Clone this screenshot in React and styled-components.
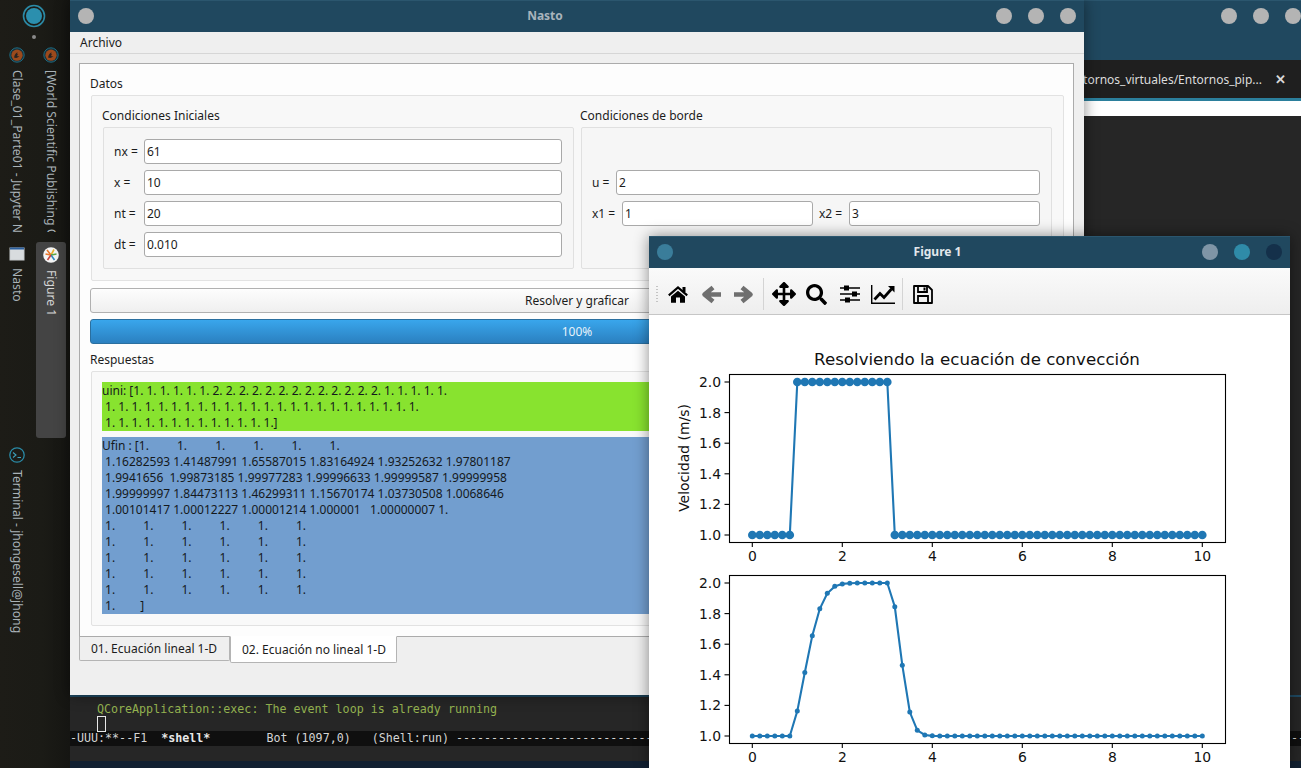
import React from "react";
import styled, { createGlobalStyle } from "styled-components";
import { FaArrowsAlt, FaSearch } from "react-icons/fa";

const uFin = [
  1, 1, 1, 1, 1, 1, 1.16282593, 1.41487991, 1.65587015, 1.83164924, 1.93252632, 1.97801187,
  1.9941656, 1.99873185, 1.99977283, 1.99996633, 1.99999587, 1.99999958, 1.99999997, 1.84473113,
  1.46299311, 1.15670174, 1.03730508, 1.0068646, 1.00101417, 1.00012227, 1.00001214, 1.000001,
  1.00000007,
];
const finData = Array.from({ length: 61 }, (_, i) => (i < uFin.length ? uFin[i] : 1));
const iniData = Array.from({ length: 61 }, (_, i) => (i >= 6 && i <= 18 ? 2 : 1));

const UINI = `uini: [1. 1. 1. 1. 1. 1. 2. 2. 2. 2. 2. 2. 2. 2. 2. 2. 2. 2. 2. 1. 1. 1. 1. 1.
 1. 1. 1. 1. 1. 1. 1. 1. 1. 1. 1. 1. 1. 1. 1. 1. 1. 1. 1. 1. 1. 1. 1. 1.
 1. 1. 1. 1. 1. 1. 1. 1. 1. 1. 1. 1. 1.]`;

const ONES = " 1.         1.         1.         1.         1.         1.";
const UFIN = `Ufin : [1.         1.         1.         1.         1.         1.
 1.16282593 1.41487991 1.65587015 1.83164924 1.93252632 1.97801187
 1.9941656  1.99873185 1.99977283 1.99996633 1.99999587 1.99999958
 1.99999997 1.84473113 1.46299311 1.15670174 1.03730508 1.0068646
 1.00101417 1.00012227 1.00001214 1.000001   1.00000007 1.
${ONES}
${ONES}
${ONES}
${ONES}
${ONES}
 1.        ]`;

const GlobalStyle = createGlobalStyle`
  html, body {
    margin: 0;
    padding: 0;
    overflow: hidden;
    background: #1b1a16;
  }
  * { box-sizing: border-box; }
`;

const Desktop = styled.div`
  position: relative;
  width: 1301px;
  height: 768px;
  overflow: hidden;
  font-family: "Noto Sans", "Liberation Sans", sans-serif;
  font-size: 12px;
  color: #1c1c1c;
  background: #1b1a16;
`;

/* left dock */
const Dock = styled.div`
  width: 70px;
  height: 768px;
  display: flex;
  flex-direction: column;
  align-items: stretch;
  background: linear-gradient(90deg, #1d1c17 0%, #1b1b16 60%, #151512 100%);
  color: #aeb6ba;
`;

const DockLogo = styled.div`
  height: 41px;
  display: flex;
  flex-direction: column;
  align-items: center;
  padding: 4px 2px 0 0;
  gap: 7px;
`;

const LogoDot = styled.span`
  width: 4px;
  height: 4px;
  border-radius: 50%;
  background: #8a8a8a;
`;

const TaskGrid = styled.div`
  display: grid;
  grid-template-columns: 34px 30px;
  column-gap: 2px;
  grid-template-rows: 200px 200px 1fr;
`;

const Task = styled.div`
  display: flex;
  flex-direction: column;
  align-items: center;
  gap: 7px;
  padding-top: ${(p) => (p.$active ? 5 : 6)}px;
  margin-top: ${(p) => (p.$active ? 1 : 0)}px;
  height: ${(p) => (p.$active ? 196 : 200)}px;
  border-radius: 3px;
  background: ${(p) => (p.$active ? "#444444" : "transparent")};
`;

const TaskLabel = styled.div`
  writing-mode: vertical-rl;
  white-space: nowrap;
  overflow: hidden;
  font-size: 12.2px;
  line-height: 16px;
  max-height: ${(p) => p.$max || 164}px;
  color: ${(p) => (p.$active ? "#d6d6d6" : "#a9b2b7")};
`;

/* windows */
const WindowFrame = styled.div`
  position: absolute;
  left: ${(p) => p.$left}px;
  top: ${(p) => p.$top}px;
  width: ${(p) => p.$width}px;
  height: ${(p) => p.$height}px;
  display: flex;
  flex-direction: column;
  box-shadow: ${(p) => (p.$flat ? "none" : "0 0 14px rgba(0, 0, 0, 0.45)")};
`;

const TitleBar = styled.div`
  height: ${(p) => p.$height || 32}px;
  flex: none;
  display: flex;
  align-items: flex-start;
  padding: 8px ${(p) => (p.$right === undefined ? 8 : p.$right)}px 0 8px;
  background: #20485f;
  border-top: 1px solid #2b566e;
`;

const TitleText = styled.div`
  flex: 1;
  text-align: center;
  font-weight: 700;
  line-height: 14px;
  color: ${(p) => p.$color || "#a9b4bc"};
`;

const Buttons = styled.div`
  display: flex;
  gap: 16px;
  margin-top: -1px;
`;

const Dot = styled.span`
  display: block;
  width: 16px;
  height: 16px;
  margin-top: ${(p) => (p.$lead ? -1 : 0)}px;
  border-radius: 50%;
  background: ${(p) => p.$color || "#b4b4b4"};
`;

/* terminal behind */
const TermTabs = styled.div`
  height: 38px;
  flex: none;
  display: flex;
  justify-content: flex-end;
  align-items: center;
  gap: 13px;
  padding-right: 15px;
  background: #1f1f1f;
  color: #dcdcdc;
`;

const TabClose = styled.span`
  font-weight: 700;
  font-size: 13px;
  color: #d8d8d8;
`;

const TermAccent = styled.div`
  height: 3px;
  flex: none;
  background: #2b7f9c;
`;

const TermBody = styled.div`
  flex: 1;
  min-height: 0;
  display: flex;
  background: #262626;
`;

const EditorColumn = styled.div`
  flex: 1;
  display: flex;
  flex-direction: column;
  justify-content: space-between;
`;

const WhiteStripe = styled.div`
  height: 15px;
  background: #ffffff;
`;

const ScrollTrack = styled.div`
  width: 13px;
  flex: none;
  padding: 4px 0 5px 8px;
  background: #1a1c1e;
`;

const ScrollThumb = styled.div`
  height: 100%;
  width: 100%;
  border-radius: 3px 0 0 3px;
  background: #7f7f7f;
`;

const Emacs = styled.div`
  display: flex;
  flex-direction: column;
  font-family: "DejaVu Sans Mono", "Liberation Mono", monospace;
  font-size: 11.66px;
  white-space: pre;
  border-top: 2px solid #1f4a63;
`;

const ShellLine = styled.div`
  height: ${(p) => p.$height}px;
  padding-top: ${(p) => p.$top || 0}px;
  line-height: 15px;
  padding-left: 27px;
  color: #94b350;
`;

const EmacsCursor = styled.span`
  display: block;
  position: relative;
  z-index: 1;
  width: 9px;
  height: 16px;
  border: 1px solid #e8e8e8;
`;

const ModeLine = styled.div`
  height: 15px;
  line-height: 15px;
  overflow: hidden;
  background: #0f0f0f;
  color: #d4d4d4;
  b { font-weight: 700; color: #e8e8e8; }
`;

const MiniBuffer = styled.div`
  height: 15px;
  background: #262626;
`;

const BottomEdge = styled.div`
  height: 7px;
  background: #122031;
`;

/* Nasto */
const NastoBody = styled.div`
  flex: 1;
  display: flex;
  flex-direction: column;
  background: #efefef;
`;

const MenuBar = styled.div`
  height: 22px;
  flex: none;
  padding-left: 10px;
  line-height: 21px;
  border-bottom: 1px solid #d6d6d6;
`;

const TabsArea = styled.div`
  padding: 9px 10px 0 9px;
`;

const TabPane = styled.div`
  height: 574px;
  padding: 12px 9px 0 10px;
  border: 1px solid #ababab;
  background: #fdfdfd;
`;

const GroupTitle = styled.div`
  height: 16px;
  line-height: 16px;
  margin-bottom: ${(p) => p.$gap || 3}px;
  margin-left: ${(p) => p.$indent || 0}px;
`;

const DataGroup = styled.div`
  height: 186px;
  margin-left: 1px;
  padding: 12px 11px 0;
  display: grid;
  grid-template-columns: 471px 471px;
  column-gap: 7px;
  border: 1px solid #e2e2e2;
  border-radius: 2px;
  background: #f8f8f8;
`;

const CondColumn = styled.div`
  display: flex;
  flex-direction: column;
`;

const CondFrame = styled.div`
  height: 142px;
  padding: 0 11px 0 10px;
  display: flex;
  flex-direction: column;
  justify-content: center;
  gap: 6px;
  border: 1px solid #e0e0e0;
  border-radius: 2px;
  background: #f6f6f6;
`;

const FieldRow = styled.div`
  display: flex;
  gap: 6px;
`;

const FieldPair = styled.div`
  flex: 1;
  display: flex;
  align-items: center;
`;

const FieldLabel = styled.span`
  flex: none;
  width: ${(p) => p.$width}px;
  white-space: nowrap;
`;

const Field = styled.div`
  flex: 1;
  height: 25px;
  line-height: 23px;
  padding-left: 2px;
  border: 1px solid #a9a9a9;
  border-radius: 3px;
  background: #ffffff;
`;

const SolveButton = styled.div`
  height: 25px;
  margin-top: 7px;
  line-height: 23px;
  text-align: center;
  border: 1px solid #b0b0b0;
  border-radius: 3px;
  background: linear-gradient(180deg, #fdfdfd, #efefef);
`;

const Progress = styled.div`
  height: 25px;
  margin-top: 6px;
  line-height: 23px;
  text-align: center;
  color: #e8f2fa;
  border: 1px solid #2a6f9f;
  border-radius: 3px;
  background: linear-gradient(180deg, #39a6ec, #2b80c0);
`;

const AnswerTitle = styled(GroupTitle)`
  margin-top: 8px;
  margin-bottom: 3px;
`;

const AnswerGroup = styled.div`
  height: 255px;
  margin-left: 1px;
  padding: 10px 11px 0 10px;
  display: flex;
  flex-direction: column;
  gap: 6px;
  border: 1px solid #e2e2e2;
  border-radius: 2px;
  background: #f9f9f9;
`;

const AnswerBlock = styled.div`
  height: ${(p) => p.$height}px;
  white-space: pre;
  line-height: 16.05px;
  padding-top: 1px;
  color: #15191c;
  background: ${(p) => p.$color};
`;

const TabBar = styled.div`
  display: flex;
  align-items: flex-start;
`;

const PageTab = styled.div`
  height: ${(p) => (p.$active ? 27 : 25)}px;
  width: ${(p) => (p.$active ? 167 : 151)}px;
  margin-top: -1px;
  padding-left: 11px;
  line-height: ${(p) => (p.$active ? 26 : 24)}px;
  white-space: nowrap;
  border: 1px solid #b4b4b4;
  border-top-color: ${(p) => (p.$active ? "#ffffff" : "#ababab")};
  border-radius: 0 0 2px 2px;
  background: ${(p) => (p.$active ? "#ffffff" : "#efefef")};
`;

/* Figure */
const FigureBody = styled.div`
  flex: 1;
  display: flex;
  flex-direction: column;
  background: #ffffff;
`;

const Toolbar = styled.div`
  height: 47px;
  flex: none;
  display: flex;
  align-items: center;
  padding: 6px 0 0 7px;
  border-bottom: 1px solid #c6c6c6;
  background: linear-gradient(180deg, #fafafa, #eeeeee);
`;

const Grip = styled.span`
  width: 2px;
  height: 18px;
  margin-right: 3px;
  background-image: radial-gradient(circle, #c4c4c4 0.7px, transparent 0.9px);
  background-size: 2px 3px;
`;

const ToolButton = styled.span`
  width: 33px;
  height: 33px;
  flex: none;
  display: flex;
  align-items: center;
  justify-content: center;
  color: ${(p) => (p.$off ? "#6f6f6f" : "#000000")};
  font-size: ${(p) => p.$size || 21}px;
`;

const ToolSep = styled.span`
  width: 1px;
  height: 32px;
  margin: 0 3px;
  background: #d4d4d4;
`;

const PlotArea = styled.svg`
  display: block;
  flex: none;
`;

const DockRing = () => (
  <svg width="24" height="24" viewBox="0 0 24 24">
    <circle cx="12" cy="12" r="10.5" fill="none" stroke="#2b8aa6" strokeWidth="1.6" />
    <circle cx="12" cy="12" r="8" fill="#2b8fae" />
  </svg>
);

const BrowserIcon = () => (
  <svg width="16" height="16" viewBox="0 0 16 16">
    <circle cx="8" cy="8" r="7.2" fill="#16313c" stroke="#1f6a80" strokeWidth="1" />
    <circle cx="8" cy="8.2" r="5.6" fill="#9c4a1c" />
    <path d="M5 10.5c2 .8 4.4.4 5.4-1.4-.9.4-1.8.3-2.4-.3l1.2-1.2-1-.4.3-2c-1.6.8-2.8 2.4-3.5 5.300z" fill="#2a2320" />
  </svg>
);

const WindowIcon = () => (
  <svg width="16" height="14" viewBox="0 0 16 14">
    <rect x="1" y="1" width="14" height="12" fill="#d8dcde" stroke="#c8ccce" />
    <rect x="1" y="0.500" width="14" height="2" fill="#2a5f9e" />
  </svg>
);

const FigureIcon = () => (
  <svg width="16" height="16" viewBox="0 0 16 16">
    <circle cx="8" cy="8" r="7.8" fill="#f4f4f4" />
    <path d="M8 8L4 3M8 8L2.500 7" stroke="#e8762c" strokeWidth="1.600" />
    <path d="M8 8L11 2.500" stroke="#e8b02c" strokeWidth="1.600" />
    <path d="M8 8L13.500 7" stroke="#5aa845" strokeWidth="1.300" />
    <path d="M8 8L11.500 13" stroke="#2f8ac0" strokeWidth="1.600" />
    <path d="M8 8L4.500 13" stroke="#c8443c" strokeWidth="1.600" />
  </svg>
);

const TerminalIcon = () => (
  <svg width="16" height="16" viewBox="0 0 16 16">
    <circle cx="8" cy="8" r="7.200" fill="none" stroke="#2a8aa6" strokeWidth="1.300" />
    <path d="M4 5.500L7 8L4 10.500M8.500 10.500H12" fill="none" stroke="#3fa0bb" strokeWidth="1.100" />
  </svg>
);

/* toolbar glyphs, drawn to follow the old matplotlib set */
const HomeGlyph = () => (
  <svg width="20" height="17" viewBox="0 0 20 17">
    <path d="M0.800 9.300L10 1.500L19.200 9.300" fill="none" stroke="#000" strokeWidth="2.200" />
    <rect x="14.500" y="1" width="3" height="5" fill="#000" />
    <path d="M3 10.500L10 4.700L17 10.500V16.800H12V11.500H8V16.800H3Z" fill="#000" />
  </svg>
);

const BackGlyph = ({ flip }) => (
  <svg width="20" height="19" viewBox="0 0 20 19" transform={flip ? "scale(-1 1)" : undefined}>
    <path d="M20 9.500H5M12 2.500L3.500 9.500L12 16.500" fill="none" stroke="#6f6f6f" strokeWidth="4.600" strokeLinejoin="round" />
  </svg>
);

const SlidersGlyph = () => (
  <svg width="20" height="18" viewBox="0 0 20 18">
    <path d="M0 3H20M0 9H20M0 15H20" stroke="#000" strokeWidth="1.600" />
    <rect x="4" y="0.500" width="5" height="5" fill="#000" />
    <rect x="12" y="6.500" width="5" height="5" fill="#000" />
    <rect x="5" y="12.500" width="5" height="5" fill="#000" />
  </svg>
);

const ChartGlyph = () => (
  <svg width="24" height="19" viewBox="0 0 24 19">
    <path d="M0.700 0V18.300H24" fill="none" stroke="#000" strokeWidth="1.400" />
    <path d="M3.500 14.500L9 8.500L13 12.500L20.500 4" fill="none" stroke="#000" strokeWidth="2.800" />
    <path d="M17 1H23.500V7.500Z" fill="#000" />
  </svg>
);

const SaveGlyph = () => (
  <svg width="20" height="19" viewBox="0 0 20 19">
    <path d="M1 1H15L19 5V18H1Z" fill="none" stroke="#000" strokeWidth="1.800" strokeLinejoin="round" />
    <path d="M5 1.500V7H14V1.500" fill="none" stroke="#000" strokeWidth="1.800" />
    <rect x="10.500" y="2.500" width="2" height="3" fill="#000" />
    <path d="M5 17.500V11H15V17.500" fill="none" stroke="#000" strokeWidth="1.800" />
  </svg>
);

const X0 = 752.3;
const PX_PER_X = 45;
const xPos = (v) => X0 + v * PX_PER_X;

function Axes({ top, data, radius, yLabel }) {
  const y2 = top + 8;
  const yPos = (v) => y2 + (2 - v) * 153;
  const bottom = top + 168;
  const points = data.map((v, i) => [xPos((i * 10) / 60), yPos(v)]);
  return (
    <g fontFamily='"DejaVu Sans", sans-serif' fontSize="13.9" fill="#111">
      <polyline
        points={points.map((p) => p.join(",")).join(" ")}
        fill="none"
        stroke="#1f77b4"
        strokeWidth="2.1"
      />
      {points.map(([x, y], i) => (
        <circle key={i} cx={x} cy={y} r={radius} fill="#1f77b4" />
      ))}
      <rect x="729.5" y={top + 0.5} width="496" height="168" fill="none" stroke="#000" strokeWidth="1.1" />
      {[0, 2, 4, 6, 8, 10].map((t) => (
        <g key={t}>
          <line x1={xPos(t)} x2={xPos(t)} y1={bottom} y2={bottom + 5} stroke="#000" strokeWidth="1.1" />
          <text x={xPos(t)} y={bottom + 19} textAnchor="middle">{t}</text>
        </g>
      ))}
      {[1, 1.2, 1.4, 1.6, 1.8, 2].map((t) => (
        <g key={t}>
          <line x1="724.5" x2="729.5" y1={yPos(t)} y2={yPos(t)} stroke="#000" strokeWidth="1.1" />
          <text x="721" y={yPos(t) + 5} textAnchor="end">{t.toFixed(1)}</text>
        </g>
      ))}
      {yLabel && (
        <text transform={`translate(689 458) rotate(-90)`} textAnchor="middle">{yLabel}</text>
      )}
    </g>
  );
}

export default function App() {
  return (
    <Desktop>
      <GlobalStyle />
      <Dock>
        <DockLogo>
          <DockRing />
          <LogoDot />
        </DockLogo>
        <TaskGrid>
          <Task>
            <BrowserIcon />
            <TaskLabel $max={162}>Clase_01_Parte01 - Jupyter Nc</TaskLabel>
          </Task>
          <Task>
            <BrowserIcon />
            <TaskLabel $max={162}>[World Scientific Publishing Co</TaskLabel>
          </Task>
          <Task>
            <WindowIcon />
            <TaskLabel>Nasto</TaskLabel>
          </Task>
          <Task $active>
            <FigureIcon />
            <TaskLabel $active>Figure 1</TaskLabel>
          </Task>
          <Task>
            <TerminalIcon />
            <TaskLabel>Terminal - jhongesell@jhonge</TaskLabel>
          </Task>
        </TaskGrid>
      </Dock>

      <WindowFrame $left={70} $top={0} $width={1231} $height={768} $flat>
        <TitleBar $height={60} $right={0}>
          <TitleText />
          <Buttons>
            <Dot />
            <Dot />
            <Dot />
          </Buttons>
        </TitleBar>
        <TermTabs>
          <span>Entornos_virtuales/Entornos_pip...</span>
          <TabClose>✕</TabClose>
        </TermTabs>
        <TermAccent />
        <TermBody>
          <EditorColumn>
            <WhiteStripe />
            <Emacs>
              <ShellLine $height={19} $top={5}>QCoreApplication::exec: The event loop is already running</ShellLine>
              <ShellLine $height={15}>
                <EmacsCursor />
              </ShellLine>
              <ModeLine>
                {"-UUU:**--F1  "}
                <b>*shell*</b>
                {"        Bot (1097,0)   (Shell:run) " + "-".repeat(160)}
              </ModeLine>
              <MiniBuffer />
              <BottomEdge />
            </Emacs>
          </EditorColumn>
          <ScrollTrack>
            <ScrollThumb />
          </ScrollTrack>
        </TermBody>
      </WindowFrame>

      <WindowFrame $left={70} $top={0} $width={1014} $height={695}>
        <TitleBar>
          <Dot $lead />
          <TitleText>Nasto</TitleText>
          <Buttons>
            <Dot />
            <Dot />
            <Dot />
          </Buttons>
        </TitleBar>
        <NastoBody>
          <MenuBar>Archivo</MenuBar>
          <TabsArea>
            <TabPane>
              <GroupTitle>Datos</GroupTitle>
              <DataGroup>
                <CondColumn>
                  <GroupTitle $gap={3} $indent={-1}>Condiciones Iniciales</GroupTitle>
                  <CondFrame>
                    <FieldRow>
                      <FieldPair>
                        <FieldLabel $width={30}>nx =</FieldLabel>
                        <Field>61</Field>
                      </FieldPair>
                    </FieldRow>
                    <FieldRow>
                      <FieldPair>
                        <FieldLabel $width={30}>x =</FieldLabel>
                        <Field>10</Field>
                      </FieldPair>
                    </FieldRow>
                    <FieldRow>
                      <FieldPair>
                        <FieldLabel $width={30}>nt =</FieldLabel>
                        <Field>20</Field>
                      </FieldPair>
                    </FieldRow>
                    <FieldRow>
                      <FieldPair>
                        <FieldLabel $width={30}>dt =</FieldLabel>
                        <Field>0.010</Field>
                      </FieldPair>
                    </FieldRow>
                  </CondFrame>
                </CondColumn>
                <CondColumn>
                  <GroupTitle $gap={3} $indent={-1}>Condiciones de borde</GroupTitle>
                  <CondFrame>
                    <FieldRow>
                      <FieldPair>
                        <FieldLabel $width={24}>u =</FieldLabel>
                        <Field>2</Field>
                      </FieldPair>
                    </FieldRow>
                    <FieldRow>
                      <FieldPair>
                        <FieldLabel $width={30}>x1 =</FieldLabel>
                        <Field>1</Field>
                      </FieldPair>
                      <FieldPair>
                        <FieldLabel $width={30}>x2 =</FieldLabel>
                        <Field>3</Field>
                      </FieldPair>
                    </FieldRow>
                  </CondFrame>
                </CondColumn>
              </DataGroup>
              <SolveButton>Resolver y graficar</SolveButton>
              <Progress>100%</Progress>
              <AnswerTitle>Respuestas</AnswerTitle>
              <AnswerGroup>
                <AnswerBlock $height={49} $color="#88e32f">{UINI}</AnswerBlock>
                <AnswerBlock $height={177} $color="#729ecf">{UFIN}</AnswerBlock>
              </AnswerGroup>
            </TabPane>
            <TabBar>
              <PageTab>01. Ecuación lineal 1-D</PageTab>
              <PageTab $active>02. Ecuación no lineal 1-D</PageTab>
            </TabBar>
          </TabsArea>
        </NastoBody>
      </WindowFrame>

      <WindowFrame $left={649} $top={236} $width={641} $height={532}>
        <TitleBar>
          <Dot $lead $color="#3a7d9a" />
          <TitleText $color="#e2e7eb">Figure 1</TitleText>
          <Buttons>
            <Dot $color="#7f95a6" />
            <Dot $color="#2f8ba8" />
            <Dot $color="#14304a" />
          </Buttons>
        </TitleBar>
        <FigureBody>
          <Toolbar>
            <Grip />
            <ToolButton><HomeGlyph /></ToolButton>
            <ToolButton $off><BackGlyph /></ToolButton>
            <ToolButton $off><BackGlyph flip /></ToolButton>
            <ToolSep />
            <ToolButton $size={24}><FaArrowsAlt /></ToolButton>
            <ToolButton><FaSearch /></ToolButton>
            <ToolButton><SlidersGlyph /></ToolButton>
            <ToolButton><ChartGlyph /></ToolButton>
            <ToolSep />
            <ToolButton><SaveGlyph /></ToolButton>
          </Toolbar>
          <PlotArea width="641" height="453" viewBox="649 315 641 453">
            <text
              x="977"
              y="365"
              textAnchor="middle"
              fontFamily='"DejaVu Sans", sans-serif'
              fontSize="16.67"
              fill="#111"
            >
              Resolviendo la ecuación de convección
            </text>
            <Axes top={374} data={iniData} radius={4.3} yLabel="Velocidad (m/s)" />
            <Axes top={575} data={finData} radius={2.5} />
          </PlotArea>
        </FigureBody>
      </WindowFrame>
    </Desktop>
  );
}
